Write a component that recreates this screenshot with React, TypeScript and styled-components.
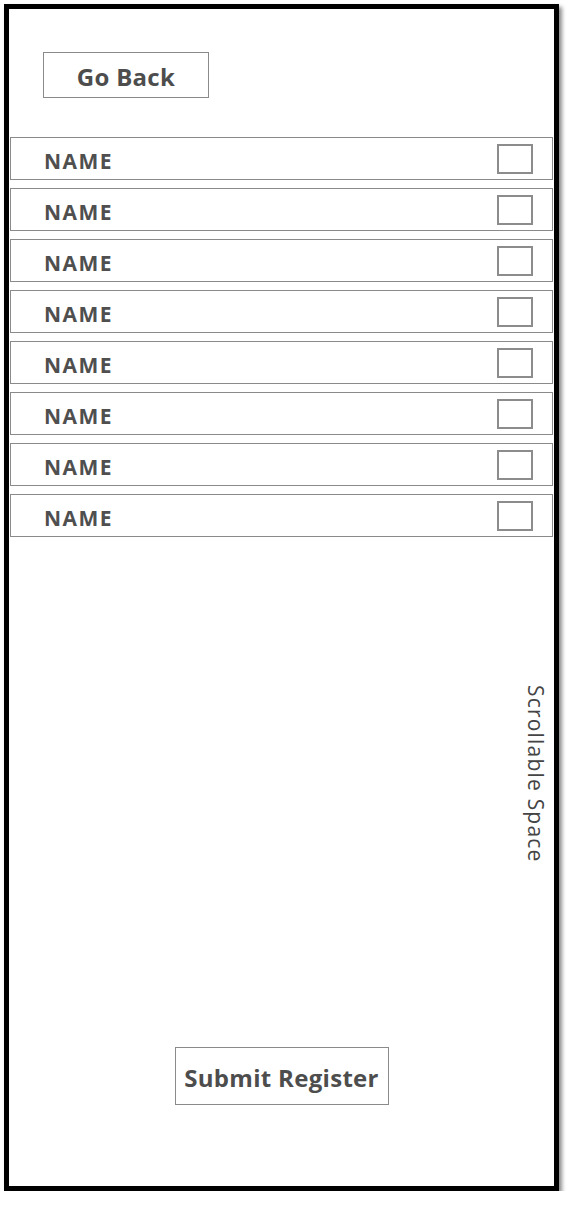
import React from "react";
import styled, { createGlobalStyle } from "styled-components";

const GlobalStyle = createGlobalStyle`
  html, body {
    margin: 0;
    padding: 0;
    background: #ffffff;
  }
  body {
    font-family: "Open Sans", "Noto Sans", sans-serif;
  }
`;

const Frame = styled.div`
  box-sizing: border-box;
  margin: 4px 0 0 4px;
  width: 555px;
  height: 1187px;
  border: 5px solid #000;
  background: #fff;
  box-shadow: 3px 3px 4px rgba(0, 0, 0, 0.45);
  display: flex;
  flex-direction: column;
`;

const Button = styled.button<{ $width: number; $height: number }>`
  box-sizing: border-box;
  width: ${({ $width }) => $width}px;
  height: ${({ $height }) => $height}px;
  background: #fff;
  border: 1.5px solid #8a8a8a;
  border-radius: 0;
  padding: 2px 0 0;
  font-family: "Open Sans", "Noto Sans", sans-serif;
  font-weight: 700;
  font-size: 24px;
  color: #4d4d4d;
  letter-spacing: 0.3px;
`;

const TopBar = styled.div`
  padding: 43px 0 0 34px;
  height: 85px;
  box-sizing: border-box;
  margin-bottom: 43px;
`;

const List = styled.div`
  display: flex;
  flex-direction: column;
  gap: 8px;
  padding: 0 1px;
`;

const Row = styled.div`
  box-sizing: border-box;
  height: 43px;
  border: 1.5px solid #8a8a8a;
  display: flex;
  align-items: center;
  justify-content: space-between;
  padding: 4px 19px 0 33px;
`;

const Name = styled.span`
  font-weight: 700;
  font-size: 21px;
  color: #4f4f4f;
  letter-spacing: 1.5px;
`;

const Check = styled.div`
  box-sizing: border-box;
  width: 36px;
  height: 30px;
  border: 2px solid #8c8c8c;
  background: #fff;
  margin-top: -4px;
`;

const ScrollArea = styled.div`
  flex: 1;
  display: flex;
  justify-content: flex-end;
  padding: 148px 4px 0 0;
`;

const VerticalLabel = styled.span`
  writing-mode: vertical-rl;
  font-size: 21px;
  font-weight: 500;
  color: #444;
  height: fit-content;
  letter-spacing: 1.2px;
`;

const Footer = styled.div`
  display: flex;
  justify-content: center;
  padding-bottom: 81px;
`;

const names = Array.from({ length: 8 }, () => "NAME");

const App = () => {
  return (
    <>
      <GlobalStyle />
      <Frame>
        <TopBar>
          <Button $width={166} $height={46}>Go Back</Button>
        </TopBar>
        <List>
          {names.map((name, i) => (
            <Row key={i}>
              <Name>{name}</Name>
              <Check />
            </Row>
          ))}
        </List>
        <ScrollArea>
          <VerticalLabel>Scrollable Space</VerticalLabel>
        </ScrollArea>
        <Footer>
          <Button $width={214} $height={58}>Submit Register</Button>
        </Footer>
      </Frame>
    </>
  );
};

export default App;
